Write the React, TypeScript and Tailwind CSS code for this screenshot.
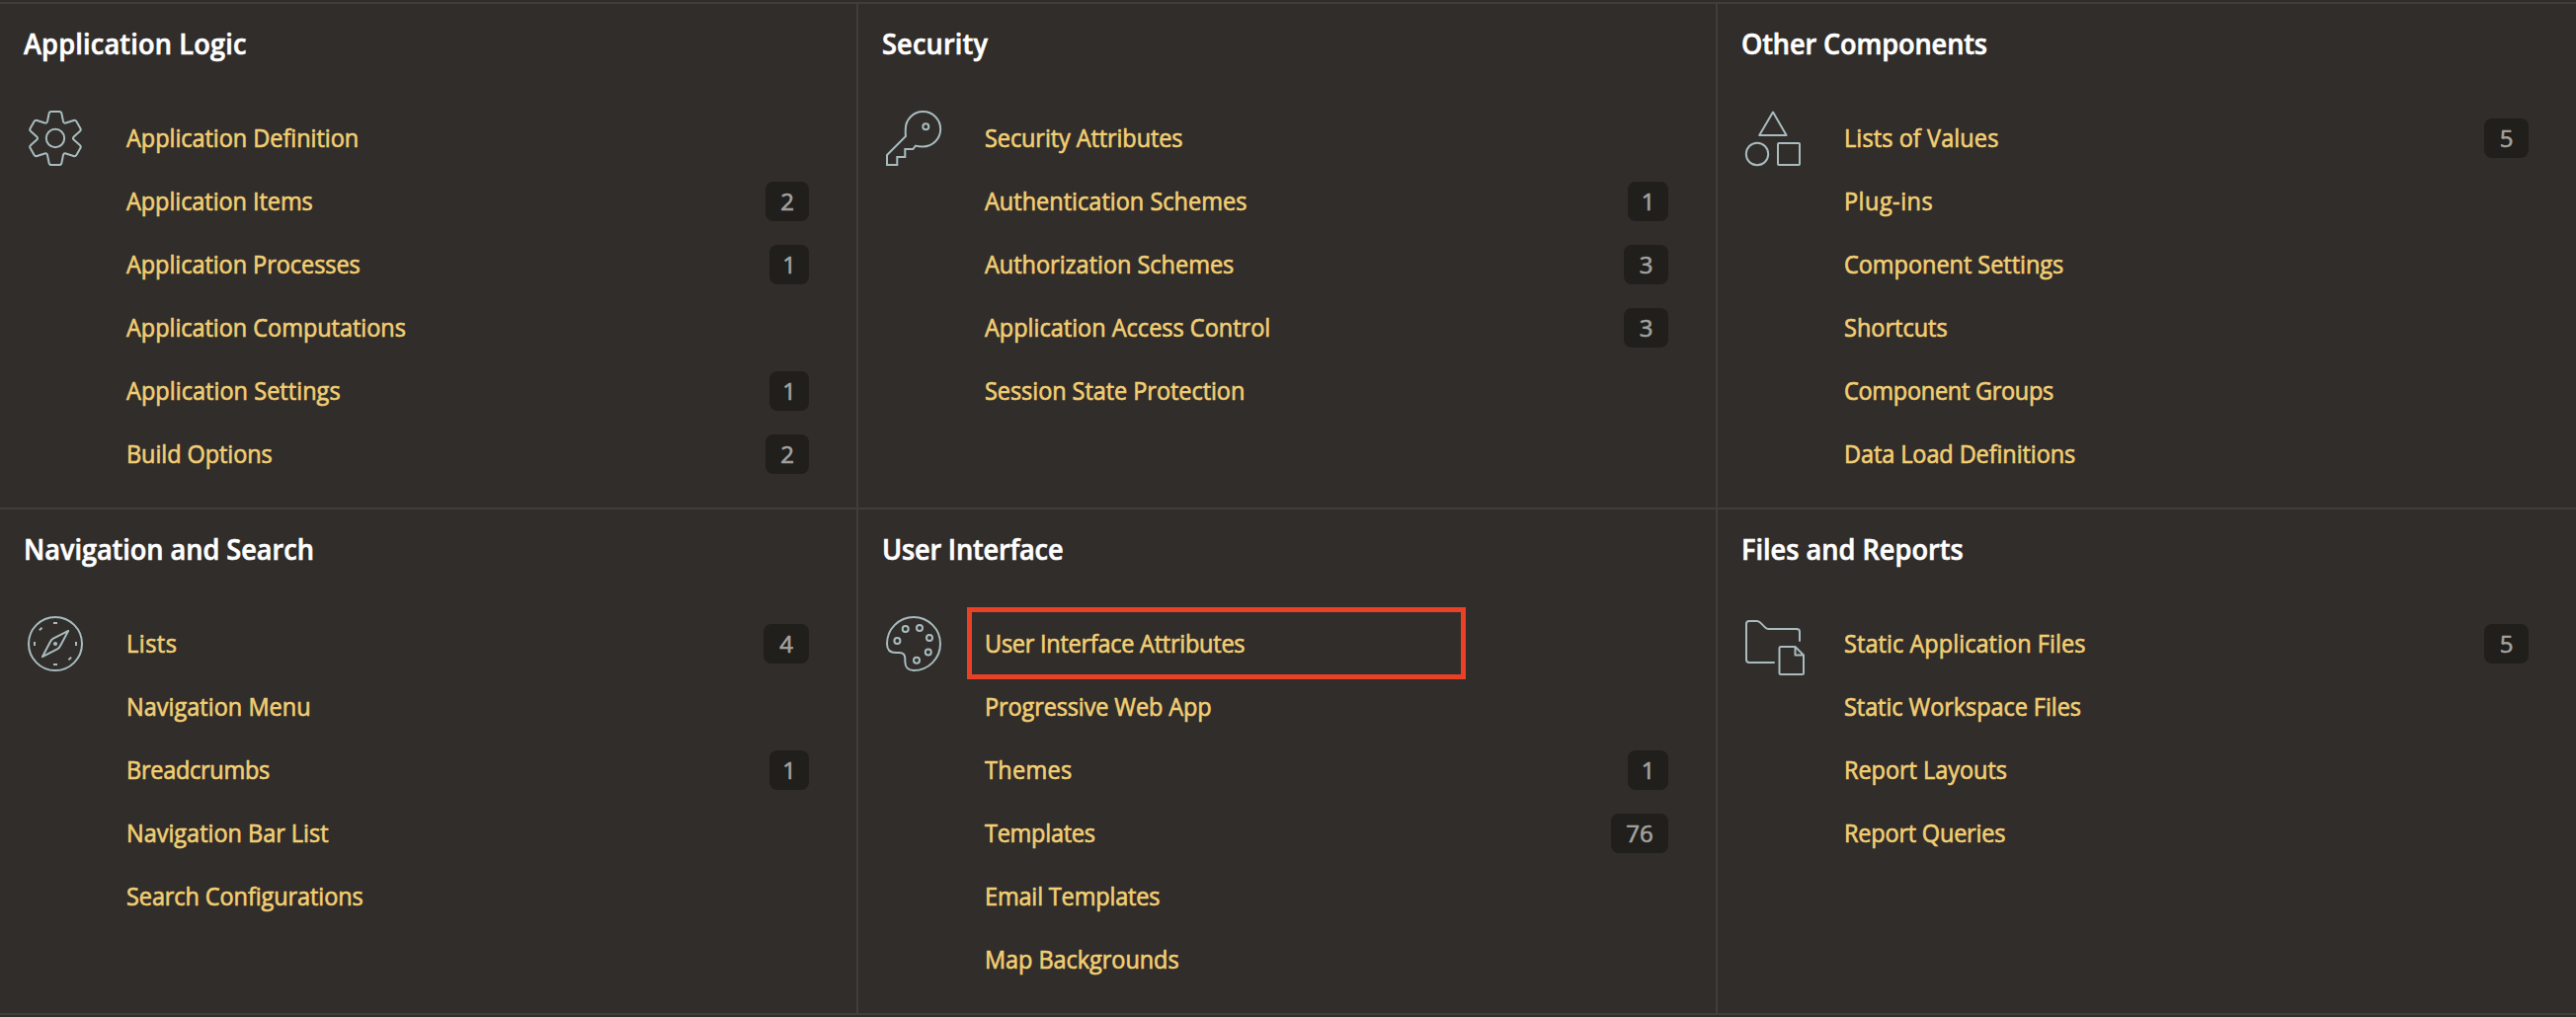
import React from "react";

type Item = { label: string; tracking: string; count?: string; badge?: string; highlight?: boolean };
type Group = { title: string; tracking: string; icon: React.ReactNode; items: Item[] };

const svgProps = {
  width: 56,
  height: 56,
  viewBox: "0 0 56 56",
  fill: "none",
  stroke: "currentColor",
  strokeWidth: 2,
  className: "mt-1 ml-1 shrink-0 overflow-visible text-[#a8bcbf]",
};

const rotate = (x: number, y: number, turn: number) => {
  const a = (turn * Math.PI) / 3;
  const px = 28 + x * Math.cos(a) - y * Math.sin(a);
  const py = 28 + x * Math.sin(a) + y * Math.cos(a);
  return `${px.toFixed(2)} ${py.toFixed(2)}`;
};

const gearPath =
  [0, 1, 2, 3, 4, 5]
    .map((i) => {
      const p = (x: number, y: number) => rotate(x, y, i);
      return `${i === 0 ? "M" : "L"}${p(-8, -17)} L${p(-6.4, -25)} Q${p(-6, -27)} ${p(-4, -27)} L${p(4, -27)} Q${p(6, -27)} ${p(6.4, -25)} L${p(8, -17)} Q${p(8.6, -14.9)} ${rotate(-8, -17, i + 1)}`;
    })
    .join(" ") + "Z";

const Gear = () => (
  <svg {...svgProps}>
    <path d={gearPath} />
    <circle cx="28" cy="28" r="9.2" />
  </svg>
);

const Key = () => (
  <svg {...svgProps}>
    <path d="M1 45L20 26C19.4 23 19.8 20.5 19.8 18.7A17.7 17.7 0 1 1 37.5 36.4C34.8 36.6 32.4 36.2 30 35.6L27.3 39H19.3V47H11.3V55H1Z" />
    <circle cx="40.3" cy="16.2" r="3" />
  </svg>
);

const Shapes = () => (
  <svg {...svgProps}>
    <path d="M28 1.6L41.6 25H14.2Z" strokeLinejoin="round" />
    <circle cx="12" cy="44" r="11.2" />
    <rect x="33" y="33" width="22" height="22" rx="1" />
  </svg>
);

const Compass = () => (
  <svg {...svgProps}>
    <circle cx="28" cy="28" r="27" />
    <path d="M41.2 14.9L26 22.7Q24 23.8 22.9 26L14.9 41.2L30 33.3Q32 32.2 33.1 30Z" strokeLinejoin="round" />
    <circle cx="28" cy="28" r="2.1" fill="currentColor" stroke="none" />
    <path d="M26 7h4M26 49h4M7 26v4M49 26v4M11.8 14.2l2.8-2.4M41.4 44.2l2.8-2.4" />
  </svg>
);

const Palette = () => (
  <svg {...svgProps}>
    <path d="M28 1A27 27 0 0 1 28 55C22.5 55 19.3 51.5 19.3 46V43C19.3 38.8 17.5 37 13.5 37H10C4 37 1 33.5 1 28A27 27 0 0 1 28 1Z" />
    <circle cx="11.4" cy="25" r="3" />
    <circle cx="19.7" cy="13" r="3" />
    <circle cx="34" cy="12" r="3" />
    <circle cx="44" cy="22" r="3" />
    <circle cx="42.8" cy="36.4" r="3" />
    <circle cx="31" cy="44.7" r="3" />
  </svg>
);

const FolderFile = () => (
  <svg {...svgProps} strokeLinecap="round" strokeLinejoin="round">
    <path d="M29 47H4Q1 47 1 44V8Q1 5 4 5H11.5Q13.5 5 15 6.4L20 11.4Q21.5 13 23.5 13H52Q55 13 55 16V25" />
    <path d="M50.5 31H36Q34.5 31 34.5 32.5V57.5Q34.5 59 36 59H57.5Q59 59 59 57.5V39.5ZM50.5 31V39.5H59" />
  </svg>
);

const groups: Group[] = [
  {
    title: "Application Logic",
    tracking: "tracking-[0.17px]",
    icon: <Gear />,
    items: [
      { label: "Application Definition", tracking: "tracking-[-0.04px]" },
      { label: "Application Items", tracking: "tracking-[-0.07px]", count: "2", badge: "w-11" },
      { label: "Application Processes", tracking: "tracking-[-0.06px]", count: "1", badge: "w-10" },
      { label: "Application Computations", tracking: "tracking-[-0.04px]" },
      { label: "Application Settings", tracking: "tracking-[0.04px]", count: "1", badge: "w-10" },
      { label: "Build Options", tracking: "tracking-[-0.08px]", count: "2", badge: "w-11" },
    ],
  },
  {
    title: "Security",
    tracking: "tracking-[0.16px]",
    icon: <Key />,
    items: [
      { label: "Security Attributes", tracking: "tracking-[-0.1px]" },
      { label: "Authentication Schemes", tracking: "tracking-[0.01px]", count: "1", badge: "w-[41px]" },
      { label: "Authorization Schemes", tracking: "tracking-[-0.02px]", count: "3", badge: "w-[45px]" },
      { label: "Application Access Control", tracking: "tracking-normal", count: "3", badge: "w-[45px]" },
      { label: "Session State Protection", tracking: "tracking-[-0.06px]" },
    ],
  },
  {
    title: "Other Components",
    tracking: "tracking-[-0.14px]",
    icon: <Shapes />,
    items: [
      { label: "Lists of Values", tracking: "tracking-[0.1px]", count: "5", badge: "w-[45px]" },
      { label: "Plug-ins", tracking: "tracking-[0.5px]" },
      { label: "Component Settings", tracking: "tracking-[-0.04px]" },
      { label: "Shortcuts", tracking: "tracking-normal" },
      { label: "Component Groups", tracking: "tracking-[-0.3px]" },
      { label: "Data Load Definitions", tracking: "tracking-[-0.1px]" },
    ],
  },
  {
    title: "Navigation and Search",
    tracking: "tracking-[-0.05px]",
    icon: <Compass />,
    items: [
      { label: "Lists", tracking: "tracking-[0.5px]", count: "4", badge: "w-[46px]" },
      { label: "Navigation Menu", tracking: "tracking-[0.02px]" },
      { label: "Breadcrumbs", tracking: "tracking-[-0.3px]", count: "1", badge: "w-10" },
      { label: "Navigation Bar List", tracking: "tracking-[-0.02px]" },
      { label: "Search Configurations", tracking: "tracking-[-0.1px]" },
    ],
  },
  {
    title: "User Interface",
    tracking: "tracking-[-0.21px]",
    icon: <Palette />,
    items: [
      { label: "User Interface Attributes", tracking: "tracking-[-0.27px]", highlight: true },
      { label: "Progressive Web App", tracking: "tracking-[-0.13px]" },
      { label: "Themes", tracking: "tracking-[0.3px]", count: "1", badge: "w-[41px]" },
      { label: "Templates", tracking: "tracking-[-0.28px]", count: "76", badge: "w-[58px]" },
      { label: "Email Templates", tracking: "tracking-[-0.18px]" },
      { label: "Map Backgrounds", tracking: "tracking-[-0.06px]" },
    ],
  },
  {
    title: "Files and Reports",
    tracking: "tracking-normal",
    icon: <FolderFile />,
    items: [
      { label: "Static Application Files", tracking: "tracking-[0.06px]", count: "5", badge: "w-[45px]" },
      { label: "Static Workspace Files", tracking: "tracking-[-0.07px]" },
      { label: "Report Layouts", tracking: "tracking-[-0.05px]" },
      { label: "Report Queries", tracking: "tracking-[-0.22px]" },
    ],
  },
];

const Row = ({ item }: { item: Item }) => (
  <li className="relative flex h-16 items-center justify-between">
    <a
      href="#"
      className={`mb-0.5 origin-left scale-x-94 text-[25px] leading-[62px] whitespace-nowrap text-[#f1ce74] [-webkit-text-stroke:0.65px_#f1ce74] ${item.tracking}`}
    >
      {item.label}
    </a>
    {item.count && (
      <span
        className={`flex h-10 items-center justify-center rounded-lg bg-[#201f1c] text-2xl leading-10 text-[#a3a19f] [-webkit-text-stroke:0.65px_#a3a19f] ${item.badge}`}
      >
        {item.count}
      </span>
    )}
    {item.highlight && (
      <span className="absolute -top-[5px] -left-[18px] h-[73px] w-[505px] border-[5px] border-[#ea4025]" />
    )}
  </li>
);

const Panel = ({ group, last }: { group: Group; last: boolean }) => (
  <section
    className={`border-b-2 border-[#413d3a] pt-[22px] pr-12 pl-6 ${last ? "" : "border-r-2"}`}
  >
    <h2
      className={`mb-[46px] origin-left scale-x-97 text-[28px] leading-9 font-semibold whitespace-nowrap text-white [-webkit-text-stroke:0.6px_white] ${group.tracking}`}
    >
      {group.title}
    </h2>
    <div className="flex">
      {group.icon}
      <ul className="ml-11 grow">
        {group.items.map((item) => (
          <Row key={item.label} item={item} />
        ))}
      </ul>
    </div>
  </section>
);

export default function App() {
  return (
    <main className="h-[1030px] w-[2608px] overflow-hidden bg-[#312d2a] pt-0.5 font-['Open_Sans','Noto_Sans',sans-serif]">
      <div className="grid grid-cols-[869px_870px_869px] grid-rows-[512px_512px] border-t-2 border-[#413d3a]">
        {groups.map((group, i) => (
          <Panel key={group.title} group={group} last={i % 3 === 2} />
        ))}
      </div>
    </main>
  );
}
